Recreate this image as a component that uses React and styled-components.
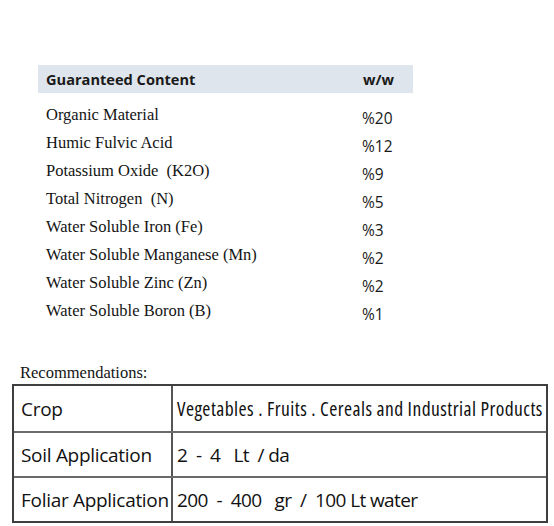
import styled, { createGlobalStyle } from "styled-components";

const GlobalStyle = createGlobalStyle`
  html, body {
    margin: 0;
    padding: 0;
    background: #ffffff;
  }
`;

const contents = [
  { name: "Organic Material", value: "%20" },
  { name: "Humic Fulvic Acid", value: "%12" },
  { name: "Potassium Oxide  (K2O)", value: "%9" },
  { name: "Total Nitrogen  (N)", value: "%5" },
  { name: "Water Soluble Iron (Fe)", value: "%3" },
  { name: "Water Soluble Manganese (Mn)", value: "%2" },
  { name: "Water Soluble Zinc (Zn)", value: "%2" },
  { name: "Water Soluble Boron (B)", value: "%1" },
];

const recommendations = [
  { label: "Crop", value: "Vegetables . Fruits . Cereals and Industrial Products", tight: true },
  { label: "Soil Application", value: "2  -  4   Lt  / da" },
  { label: "Foliar Application", value: "200  -  400   gr  /  100 Lt water" },
];

const App = () => {
  return (
    <Page>
      <GlobalStyle />
      <ContentBlock>
        <HeaderBand>
          <HeaderCell>Guaranteed Content</HeaderCell>
          <HeaderCell>w/w</HeaderCell>
        </HeaderBand>
        <ContentList>
          {contents.map((item) => (
            <ContentRow key={item.name}>
              <Ingredient>{item.name}</Ingredient>
              <Amount>{item.value}</Amount>
            </ContentRow>
          ))}
        </ContentList>
      </ContentBlock>

      <RecTitle>Recommendations:</RecTitle>
      <RecTable>
        {recommendations.map((row, i) => (
          <RecRow key={row.label} $first={i === 0}>
            <RecLabel>{row.label}</RecLabel>
            <RecValue $tight={row.tight}>{row.value}</RecValue>
          </RecRow>
        ))}
      </RecTable>
    </Page>
  );
};

const Page = styled.div`
  width: 554px;
  height: 526px;
  padding-top: 65px;
  box-sizing: border-box;
  color: #1a1a1a;
`;

const ContentBlock = styled.div`
  margin-left: 38px;
  width: 375px;
`;

const HeaderBand = styled.div`
  display: grid;
  grid-template-columns: 324px 1fr;
  height: 28px;
  align-items: center;
  background: #dfe5ec;
  font-family: "Open Sans", sans-serif;
  font-weight: 700;
  font-size: 14.6px;
  color: #1a1a1a;
`;

const HeaderCell = styled.div`
  padding-left: 8px;
  &:last-child {
    padding-left: 1px;
  }
`;

const ContentList = styled.div`
  padding-top: 8px;
`;

const ContentRow = styled.div`
  display: grid;
  grid-template-columns: 324px 1fr;
  height: 28px;
  align-items: center;
`;

const Ingredient = styled.div`
  padding-left: 8px;
  font-family: "Liberation Serif", serif;
  font-size: 16.5px;
  white-space: pre;
  color: #141414;
`;

const Amount = styled.div`
  font-family: "Open Sans", sans-serif;
  font-size: 15.5px;
  font-stretch: 92%;
  padding-top: 5px;
`;

const RecTitle = styled.div`
  margin: 38px 0 0 20px;
  height: 21px;
  font-family: "Liberation Serif", serif;
  font-size: 16.5px;
  color: #141414;
`;

const RecTable = styled.div`
  margin-left: 12px;
  width: 536px;
  border: 2px solid #3f3f3f;
  box-sizing: border-box;
  font-family: "Open Sans", sans-serif;
  font-size: 19px;
  color: #111;
`;

const RecRow = styled.div`
  display: grid;
  grid-template-columns: 159px 1fr;
  height: 45px;
  border-top: ${(p) => (p.$first ? "none" : "2px solid #6a6a6a")};
  box-sizing: border-box;
`;

const RecLabel = styled.div`
  display: flex;
  align-items: center;
  padding-left: 7px;
  border-right: 2px solid #555;
  white-space: pre;
  font-stretch: 96%;
  letter-spacing: -0.3px;
`;

const RecValue = styled.div`
  display: flex;
  align-items: center;
  padding-left: 4px;
  white-space: pre;
  overflow: hidden;
  font-size: ${(p) => (p.$tight ? "19.5px" : "19px")};
  font-stretch: ${(p) => (p.$tight ? "75%" : "89%")};
  letter-spacing: ${(p) => (p.$tight ? "0.45px" : "-0.6px")};
`;

export default App;
